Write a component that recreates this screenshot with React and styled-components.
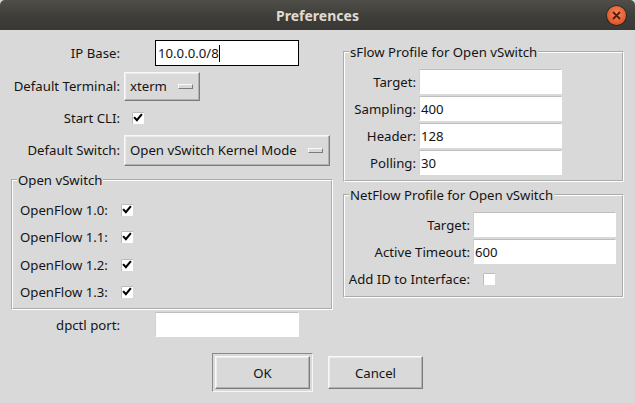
import React from "react";
import styled, { createGlobalStyle, css } from "styled-components";

const FONT = `"Noto Sans", "DejaVu Sans", sans-serif`;

const Global = createGlobalStyle`
  html, body { margin: 0; padding: 0; background: #d9d9d9; }
  body { font-family: ${FONT}; font-size: 13.2px; color: #141414; }
  * { box-sizing: border-box; }
`;

const Window = styled.div`
  width: 635px;
  height: 403px;
  display: flex;
  flex-direction: column;
  overflow: hidden;
  background: #d9d9d9;
`;

const TitleBar = styled.div`
  height: 30px;
  flex: none;
  display: grid;
  grid-template-columns: 1fr auto 1fr;
  align-items: center;
  padding: 0 9px;
  background: linear-gradient(#4f4e49, #3e3d39 55%, #393834);
  border-radius: 5px 5px 0 0;
`;

const Title = styled.div`
  grid-column: 2;
  color: #dfdbd2;
  font-weight: 700;
  font-size: 14px;
`;

const CloseButton = styled.div`
  grid-column: 3;
  justify-self: end;
  width: 19px;
  height: 19px;
  border-radius: 50%;
  display: flex;
  align-items: center;
  justify-content: center;
  background: radial-gradient(circle at 50% 40%, #f7895f, #e35a2f 65%, #c0441f);
  box-shadow: 0 0 0 1px rgba(0, 0, 0, 0.35);
`;

const Body = styled.div`
  flex: 1;
  display: flex;
  flex-direction: column;
  padding-top: 8px;
`;

const Main = styled.div`
  display: flex;
  align-items: flex-start;
  padding-left: 8px;
  gap: 10px;
`;

const LeftGrid = styled.div`
  display: grid;
  grid-template-columns: 116px 209px;
  grid-template-rows: 30px 36px 28px 36px 143px 27px;
  align-items: center;
`;

const Label = styled.div`
  justify-self: end;
  padding-right: ${(p) => p.$pr ?? 4}px;
  white-space: nowrap;
`;

const Entry = styled.div`
  width: ${(p) => p.$w || 143}px;
  height: ${(p) => p.$h || 25}px;
  margin-left: ${(p) => p.$ml || 0}px;
  justify-self: start;
  background: #fff;
  border: 1px solid #fff;
  border-top-color: #bdbdbd;
  border-left-color: #d2d2d2;
  padding-left: 1px;
  display: flex;
  align-items: center;
  white-space: nowrap;
  ${(p) =>
    p.$focus &&
    css`
      border: 1px solid #000;
      padding-left: 2px;
    `}
`;

const Caret = styled.span`
  display: inline-block;
  width: 1px;
  height: 17px;
  background: #000;
`;

const OptionMenu = styled.div`
  justify-self: start;
  width: ${(p) => p.$w}px;
  height: ${(p) => p.$h || 30}px;
  display: flex;
  align-items: center;
  justify-content: space-between;
  padding: 0 6px 0 5px;
  background: #d9d9d9;
  border: 1px solid;
  border-color: #f8f8f8 #7c7c7c #7c7c7c #f8f8f8;
  box-shadow: inset -1px -1px 0 #b2b2b2, inset 1px 1px 0 #ececec;
  white-space: nowrap;
`;

const Indicator = styled.span`
  width: 15px;
  height: 5px;
  background: #d9d9d9;
  border: 1px solid;
  border-color: #fafafa #7c7c7c #7c7c7c #fafafa;
`;

const CheckWrap = styled.span`
  justify-self: start;
  display: inline-flex;
  margin-left: ${(p) => p.$ml || 0}px;
`;

const Check = ({ checked, ml }) => (
  <CheckWrap $ml={ml}>
    <svg width="12" height="12" viewBox="0 0 12 12">
      <rect x="0" y="0" width="12" height="12" fill="#fff" />
      <path d="M0.5 12 V0.5 H12" fill="none" stroke="#bcbcbc" strokeWidth="1" />
      {checked && (
        <path
          d="M2.8 5.9 L4.9 8.2 L9.2 3"
          fill="none"
          stroke="#000"
          strokeWidth="2.1"
          strokeLinecap="square"
        />
      )}
    </svg>
  </CheckWrap>
);

const Frame = styled.fieldset`
  margin: ${(p) => p.$m || "0"};
  padding: 7px 0 4px 7px;
  min-width: 0;
  border: 2px groove #ffffff;
  ${(p) =>
    p.$span &&
    css`
      grid-column: 1 / -1;
      align-self: start;
    `}
  ${(p) =>
    p.$h &&
    css`
      height: ${p.$h}px;
    `}
`;

const Legend = styled.legend`
  padding: 0 1px;
  margin-left: -3px;
  line-height: 18px;
  white-space: nowrap;
`;

const FormGrid = styled.div`
  display: grid;
  grid-template-columns: ${(p) => p.$cols || "auto auto"};
  grid-auto-rows: ${(p) => p.$row || 27}px;
  align-items: center;
  justify-content: start;
  column-gap: ${(p) => p.$gap ?? 3}px;
`;

const FlowLabel = styled.div`
  white-space: nowrap;
`;

const RightCol = styled.div`
  width: 281px;
  display: flex;
  flex-direction: column;
  gap: 4px;
  margin-top: 5px;
`;

const ButtonRow = styled.div`
  display: flex;
  justify-content: center;
  align-items: center;
  gap: 15px;
  margin-top: 15px;
`;

const DefaultRing = styled.div`
  padding: 2px;
  border: 1px solid;
  border-color: #8a8a8a #f6f6f6 #f6f6f6 #8a8a8a;
`;

const PushButton = styled.div`
  width: 95px;
  height: 33px;
  display: flex;
  align-items: center;
  justify-content: center;
  background: #d9d9d9;
  border: 1px solid;
  border-color: #f8f8f8 #7c7c7c #7c7c7c #f8f8f8;
  box-shadow: inset -1px -1px 0 #b2b2b2, inset 1px 1px 0 #ececec;
`;

export default function App() {
  return (
    <>
      <Global />
      <Window>
        <TitleBar>
          <Title>Preferences</Title>
          <CloseButton>
            <svg width="9" height="9" viewBox="0 0 9 9">
              <path d="M1.5 1.5 L7.5 7.5 M7.5 1.5 L1.5 7.5" stroke="#5a1a08" strokeWidth="1.8" strokeLinecap="round" />
            </svg>
          </CloseButton>
        </TitleBar>
        <Body>
          <Main>
            <LeftGrid>
              <Label>IP Base:</Label>
              <Entry $w={144} $h={26} $ml={31} $focus>
                10.0.0.0/8
                <Caret />
              </Entry>

              <Label>Default Terminal:</Label>
              <OptionMenu $w={76} $h={29}>
                xterm
                <Indicator />
              </OptionMenu>

              <Label>Start CLI:</Label>
              <Check checked ml={8} />

              <Label>Default Switch:</Label>
              <OptionMenu $w={206} $h={31}>
                Open vSwitch Kernel Mode
                <Indicator />
              </OptionMenu>

              <Frame $span $m="3px 0 0 3px" $h={139}>
                <Legend>Open vSwitch</Legend>
                <FormGrid $row={27.5} $gap={13}>
                  <FlowLabel>OpenFlow 1.0:</FlowLabel>
                  <Check checked />
                  <FlowLabel>OpenFlow 1.1:</FlowLabel>
                  <Check checked />
                  <FlowLabel>OpenFlow 1.2:</FlowLabel>
                  <Check checked />
                  <FlowLabel>OpenFlow 1.3:</FlowLabel>
                  <Check checked />
                </FormGrid>
              </Frame>

              <Label>dpctl port:</Label>
              <Entry $w={144} $h={25} $ml={31} />
            </LeftGrid>

            <RightCol>
              <Frame>
                <Legend>sFlow Profile for Open vSwitch</Legend>
                <FormGrid $cols="64px 143px">
                  <Label $pr={0}>Target:</Label>
                  <Entry />
                  <Label $pr={0}>Sampling:</Label>
                  <Entry>400</Entry>
                  <Label $pr={0}>Header:</Label>
                  <Entry>128</Entry>
                  <Label $pr={0}>Polling:</Label>
                  <Entry>30</Entry>
                </FormGrid>
              </Frame>
              <Frame>
                <Legend>NetFlow Profile for Open vSwitch</Legend>
                <FormGrid $cols="118px 143px">
                  <Label $pr={0}>Target:</Label>
                  <Entry />
                  <Label $pr={0}>Active Timeout:</Label>
                  <Entry>600</Entry>
                  <Label $pr={0}>Add ID to Interface:</Label>
                  <Check ml={10} />
                </FormGrid>
              </Frame>
            </RightCol>
          </Main>

          <ButtonRow>
            <DefaultRing>
              <PushButton>OK</PushButton>
            </DefaultRing>
            <PushButton>Cancel</PushButton>
          </ButtonRow>
        </Body>
      </Window>
    </>
  );
}
